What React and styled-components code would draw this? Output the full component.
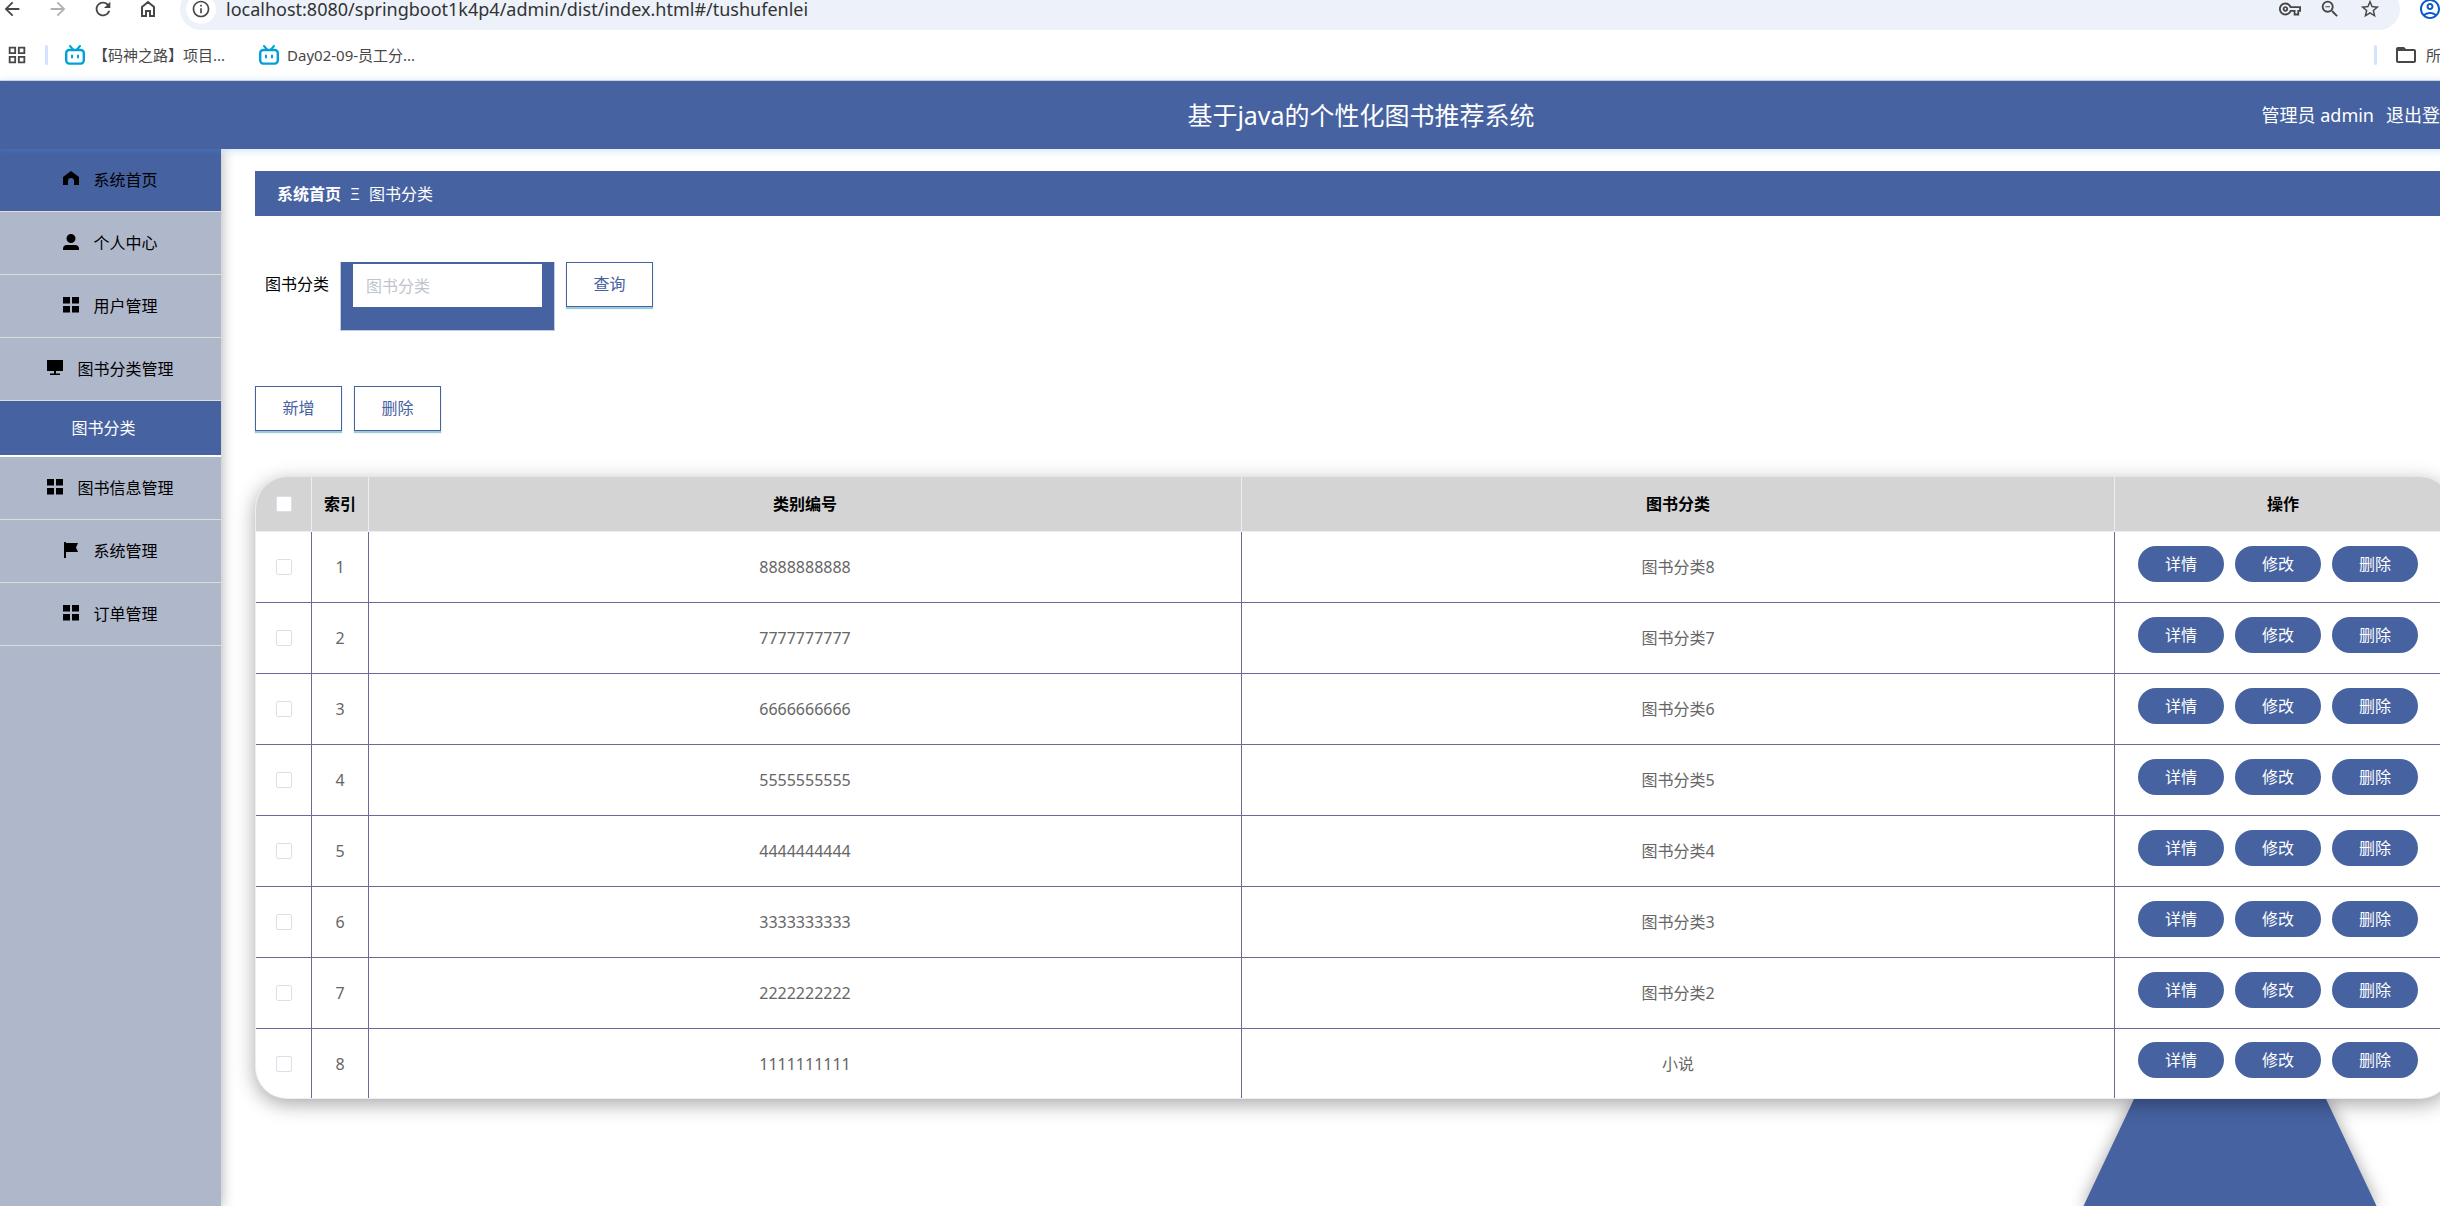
import React, { useState } from "react";
import styled, { createGlobalStyle } from "styled-components";
import {
    MdArrowBack, MdArrowForward, MdRefresh, MdInfoOutline, MdOutlineVpnKey,
    MdZoomOut, MdStarOutline, MdOutlineAccountCircle, MdOutlineGridView, MdFolderOpen
} from "react-icons/md";

const books = [
    { id: 1, code: "8888888888", name: "图书分类8" },
    { id: 2, code: "7777777777", name: "图书分类7" },
    { id: 3, code: "6666666666", name: "图书分类6" },
    { id: 4, code: "5555555555", name: "图书分类5" },
    { id: 5, code: "4444444444", name: "图书分类4" },
    { id: 6, code: "3333333333", name: "图书分类3" },
    { id: 7, code: "2222222222", name: "图书分类2" },
    { id: 8, code: "1111111111", name: "小说" },
];

const menu = [
    { icon: "home", label: "系统首页", active: true },
    { icon: "user", label: "个人中心" },
    { icon: "grid", label: "用户管理" },
    { icon: "monitor", label: "图书分类管理", child: "图书分类" },
    { icon: "grid", label: "图书信息管理" },
    { icon: "flag", label: "系统管理" },
    { icon: "grid", label: "订单管理" },
];

const menuPaths = {
    home: "M8 0 L16 6 V14 H11 V10 a3 3 0 0 0 -6 0 V14 H0 V6 Z",
    user: "M8 0 a4.5 4.5 0 0 1 0 9 a4.5 4.5 0 0 1 0 -9 Z M4 11 H12 Q16 11 16 15 V16 H0 V15 Q0 11 4 11 Z",
    grid: "M0 0 H7 V6.5 H0 Z M9 0 H16 V6.5 H9 Z M0 9 H7 V15.5 H0 Z M9 9 H16 V15.5 H9 Z",
    monitor: "M0 0 H16 V11 H0 Z M7 11 H9 V13.5 H13 V15 H3 V13.5 H7 Z",
    flag: "M1 0 H3 V1 H15 L13 5.5 L15 10 H3 V16 H1 Z",
};

const MenuIcon = ({ name }) => (
    <svg width="16" height="16" viewBox="0 0 16 16" aria-hidden="true">
        <path d={menuPaths[name]} fill="#000" />
    </svg>
);

const HomeIcon = () => (
    <svg width="20" height="20" viewBox="0 0 20 20" fill="none" stroke="#474747" strokeWidth="2" aria-hidden="true">
        <path d="M4 8 L10 3 L16 8 V17 H12 V12 H8 V17 H4 Z" />
    </svg>
);

const TvIcon = () => (
    <svg width="20" height="20" viewBox="0 0 20 20" fill="none" stroke="#00a1d6" strokeLinecap="round" aria-hidden="true">
        <rect x="1.2" y="5" width="17.6" height="13.6" rx="3" strokeWidth="2.4" />
        <path d="M5 1 L8 4.5 M15 1 L12 4.5 M7 10.5 V12.5 M13 10.5 V12.5" strokeWidth="2" />
    </svg>
);

const BrowserBar = () => (
    <header>
        <Toolbar>
            <IconButton aria-label="back"><MdArrowBack /></IconButton>
            <IconButton aria-label="forward" $faded><MdArrowForward /></IconButton>
            <IconButton aria-label="reload"><MdRefresh /></IconButton>
            <IconButton aria-label="home"><HomeIcon /></IconButton>
            <Address>
                <InfoButton aria-label="site info"><MdInfoOutline /></InfoButton>
                <UrlInput
                    aria-label="address"
                    defaultValue="localhost:8080/springboot1k4p4/admin/dist/index.html#/tushufenlei"
                />
                <AddressTools>
                    <IconButton aria-label="passwords"><MdOutlineVpnKey /></IconButton>
                    <IconButton aria-label="zoom"><MdZoomOut /></IconButton>
                    <IconButton aria-label="bookmark"><MdStarOutline /></IconButton>
                </AddressTools>
            </Address>
            <ProfileButton aria-label="profile"><MdOutlineAccountCircle /></ProfileButton>
        </Toolbar>
        <Bookmarks>
            <MdOutlineGridView size={22} />
            <Separator />
            <Bookmark href="#"><TvIcon />【码神之路】项目...</Bookmark>
            <Bookmark href="#"><TvIcon />Day02-09-员工分...</Bookmark>
            <AllBookmarks>
                <Separator />
                <Bookmark href="#"><MdFolderOpen size={24} />所有书签</Bookmark>
            </AllBookmarks>
        </Bookmarks>
    </header>
);

const SideMenu = () => (
    <Sidebar>
        {menu.map((item) => (
            <React.Fragment key={item.label}>
                <MenuLink href="#" $active={item.active}>
                    <MenuIcon name={item.icon} />
                    {item.label}
                </MenuLink>
                {item.child && <SubLink href="#">{item.child}</SubLink>}
            </React.Fragment>
        ))}
    </Sidebar>
);

const BookTable = () => {
    const [selected, setSelected] = useState([]);
    const allSelected = selected.length === books.length;

    const onToggle = (id) => {
        setSelected(selected.includes(id) ? selected.filter((s) => s !== id) : [...selected, id]);
    }

    return (
        <TableCard>
            <Table>
                <colgroup>
                    <Col $width={56} />
                    <Col $width={57} />
                    <Col />
                    <Col />
                    <Col $width={336} />
                </colgroup>
                <thead>
                    <tr>
                        <Th>
                            <Checkbox
                                type="checkbox"
                                aria-label="全选"
                                checked={allSelected}
                                onChange={() => setSelected(allSelected ? [] : books.map((b) => b.id))}
                            />
                        </Th>
                        <Th>索引</Th>
                        <Th>类别编号</Th>
                        <Th>图书分类</Th>
                        <Th>操作</Th>
                    </tr>
                </thead>
                <tbody>
                    {books.map((book) => (
                        <Row key={book.id}>
                            <Td>
                                <Checkbox
                                    type="checkbox"
                                    aria-label={book.name}
                                    checked={selected.includes(book.id)}
                                    onChange={() => onToggle(book.id)}
                                />
                            </Td>
                            <Td>{book.id}</Td>
                            <Td>{book.code}</Td>
                            <Td>{book.name}</Td>
                            <Td>
                                <Actions>
                                    <PillButton>详情</PillButton>
                                    <PillButton>修改</PillButton>
                                    <PillButton>删除</PillButton>
                                </Actions>
                            </Td>
                        </Row>
                    ))}
                </tbody>
            </Table>
        </TableCard>
    )
}

const App = () => {
    return (
        <Window>
            <GlobalStyle />
            <BrowserBar />
            <Page>
                <TopBar>
                    <Title>基于java的个性化图书推荐系统</Title>
                    <Account>
                        <span>管理员 admin</span>
                        <LogoutLink href="#">退出登录</LogoutLink>
                    </Account>
                </TopBar>
                <Layout>
                    <SideMenu />
                    <Content>
                        <Breadcrumb>
                            <b>系统首页</b>
                            <span>Ξ</span>
                            <span>图书分类</span>
                        </Breadcrumb>
                        <SearchForm onSubmit={(e) => e.preventDefault()}>
                            <label htmlFor="category">图书分类</label>
                            <InputFrame>
                                <SearchInput id="category" placeholder="图书分类" />
                            </InputFrame>
                            <OutlineButton type="submit">查询</OutlineButton>
                        </SearchForm>
                        <ButtonRow>
                            <OutlineButton>新增</OutlineButton>
                            <OutlineButton>删除</OutlineButton>
                        </ButtonRow>
                        <BookTable />
                        <Ornament viewBox="0 0 294 108" aria-hidden="true">
                            <path d="M51 0 H243 L294 108 H0 Z" fill="#4662a1" />
                        </Ornament>
                    </Content>
                </Layout>
            </Page>
        </Window>
    )
}

const GlobalStyle = createGlobalStyle`
    * {
        box-sizing: border-box;
    }
    body {
        margin: 0;
    }
    body, button, input {
        font-family: "Noto Sans", "Noto Sans CJK SC", sans-serif;
        font-size: 16px;
        line-height: 24px;
    }
    a {
        text-decoration: none;
    }
    svg {
        display: block;
        flex-shrink: 0;
    }
`

const Window = styled.div`
    display: flex;
    flex-direction: column;
    height: 100vh;
    overflow: hidden;
    background: #fff;
`

/* the toolbar runs a little past the top and right of the window */
const Toolbar = styled.div`
    display: flex;
    align-items: center;
    height: 42px;
    margin-top: -12px;
    margin-right: -20px;
`

const IconButton = styled.button`
    display: flex;
    align-items: center;
    justify-content: center;
    width: 45px;
    height: 42px;
    padding: 0;
    border: 0;
    background: none;
    color: ${(props) => (props.$faded ? "#b0b0b0" : "#474747")};
    font-size: 22px;

    ${Toolbar} > &:first-child {
        width: 35px;
        padding-right: 11px;
    }
`

const Address = styled.div`
    flex: 1;
    display: flex;
    align-items: center;
    height: 42px;
    margin-left: 10px;
    padding: 0 10px 0 6px;
    border-radius: 21px;
    background: #ecf1fa;
`

const InfoButton = styled(IconButton)`
    width: 30px;
    height: 30px;
    border-radius: 50%;
    background: #fff;
    font-size: 20px;
`

const UrlInput = styled.input`
    flex: 1;
    min-width: 0;
    padding: 0 10px;
    border: 0;
    outline: 0;
    background: none;
    color: #333;
    font-size: 18px;
`

const AddressTools = styled.div`
    display: flex;

    button {
        width: 40px;
    }
`

const ProfileButton = styled(IconButton)`
    width: 60px;
    color: #0b57d0;
    font-size: 24px;
`

const Bookmarks = styled.nav`
    display: flex;
    align-items: center;
    height: 51px;
    margin-right: -80px;
    padding-left: 6px;
    border-bottom: 1px solid #dadcd8;
    color: #474747;
`

const Separator = styled.span`
    width: 3px;
    height: 20px;
    margin: 0 17px;
    border-radius: 2px;
    background: #d3e3fd;
`

const Bookmark = styled.a`
    display: flex;
    align-items: center;
    gap: 8px;
    margin-right: 34px;
    color: #474747;
    font-size: 15px;
    white-space: nowrap;
`

const AllBookmarks = styled.div`
    display: flex;
    align-items: center;
    margin-left: auto;
`

/* the page is wider than the window, as when zoomed in */
const Page = styled.div`
    flex: 1;
    display: flex;
    flex-direction: column;
    margin-right: -46px;
`

const TopBar = styled.div`
    display: grid;
    grid-template-columns: 1fr auto 1fr;
    align-items: center;
    position: relative;
    z-index: 2;
    height: 68px;
    padding: 0 28px 0 264px;
    background: #4662a1;
    box-shadow: 0 1px 8px rgba(64, 158, 255, 0.3);
    color: #fff;
`

const Title = styled.h1`
    grid-column: 2;
    margin: 0;
    font-size: 25px;
    font-weight: 400;
    line-height: 36px;
`

const Account = styled.div`
    display: flex;
    justify-content: flex-end;
    gap: 12px;
    font-size: 18px;
`

const LogoutLink = styled.a`
    color: #fff;
`

const Layout = styled.div`
    flex: 1;
    display: flex;
`

const Sidebar = styled.nav`
    flex: 0 0 221px;
    position: relative;
    z-index: 1;
    background: #afb7cb;
    box-shadow: 1px 0 12px rgba(0, 0, 0, 0.3);
`

const MenuLink = styled.a`
    display: flex;
    align-items: center;
    justify-content: center;
    gap: 14px;
    height: 63px;
    border-bottom: 1px solid #dcdcdc;
    background: ${(props) => (props.$active ? "#4662a1" : "transparent")};
    color: #000;

    svg {
        margin-bottom: 3px;
    }
`

const SubLink = styled.a`
    display: block;
    height: 56px;
    padding-right: 14px;
    border-bottom: 2px solid #fff;
    background: #4662a1;
    color: #fff;
    line-height: 54px;
    text-align: center;
`

const Content = styled.main`
    flex: 1;
    min-width: 0;
    padding: 22px 34px 0;
`

const Breadcrumb = styled.nav`
    display: flex;
    align-items: center;
    gap: 9px;
    height: 45px;
    padding: 0 22px;
    background: #4662a1;
    color: #fff;
`

const SearchForm = styled.form`
    display: flex;
    gap: 11px;
    margin-top: 46px;
    padding-left: 10px;
    line-height: 45px;
`

const InputFrame = styled.div`
    width: 215px;
    height: 69px;
    margin-bottom: 10px;
    padding: 2px 12px 0;
    border: 1px solid #c3cbe0;
    border-top: 0;
    background: #4662a1;
`

const SearchInput = styled.input`
    display: block;
    width: 100%;
    height: 43px;
    padding: 0 13px;
    border: 0;
    outline: 0;
    background: #fff;

    &::placeholder {
        color: #c0c4cc;
    }
`

const OutlineButton = styled.button`
    width: 87px;
    height: 45px;
    padding: 0 0 2px;
    border: 1px solid #4662a1;
    background: #fff;
    box-shadow: 0 2px 1px #9bcbdb;
    color: #4662a1;
`

const ButtonRow = styled.div`
    display: flex;
    gap: 12px;
    margin-top: 45px;
`

const TableCard = styled.div`
    position: relative;
    z-index: 1;
    margin-top: 46px;
    overflow: hidden;
    border: 1px solid #ebeef5;
    border-top: 0;
    border-radius: 32px;
    background: #fff;
    box-shadow: 0 5px 20px rgba(0, 0, 0, 0.35);
`

const Table = styled.table`
    width: 100%;
    table-layout: fixed;
    border-spacing: 0;
    color: #666;
    text-align: center;
`

const Col = styled.col`
    width: ${(props) => (props.$width ? `${props.$width}px` : "auto")};
`

const Th = styled.th`
    height: 55px;
    padding: 0;
    border-right: 1px solid #ebeef5;
    border-bottom: 1px solid #ebeef5;
    background: #d4d4d4;
    color: #000;

    &:last-child {
        border-right: 0;
    }
`

const Td = styled.td`
    height: 71px;
    padding: 0;
    border-right: 1px solid #6c6a97;
    border-bottom: 1px solid #6c6a97;

    &:last-child {
        border-right: 0;
    }
`

const Row = styled.tr`
    &:last-child ${Td} {
        height: 69px;
        border-bottom: 0;
    }
`

const Checkbox = styled.input`
    appearance: none;
    display: block;
    width: 16px;
    height: 16px;
    margin: 0 auto;
    border: 1px solid #dcdfe6;
    border-radius: 2px;
    background: #fff;

    &:checked {
        background: #4662a1;
    }
`

const Actions = styled.div`
    display: flex;
    gap: 11px;
    padding: 0 0 7px 23px;
`

const PillButton = styled.button`
    width: 86px;
    height: 36px;
    padding: 0;
    border: 0;
    border-radius: 18px;
    background: #4662a1;
    color: #fff;
`

const Ornament = styled.svg`
    width: 294px;
    height: 108px;
    margin: 0 75px 0 auto;
    overflow: visible;
    filter: drop-shadow(0 0 8px rgba(0, 0, 0, 0.35));
`

export default App;
